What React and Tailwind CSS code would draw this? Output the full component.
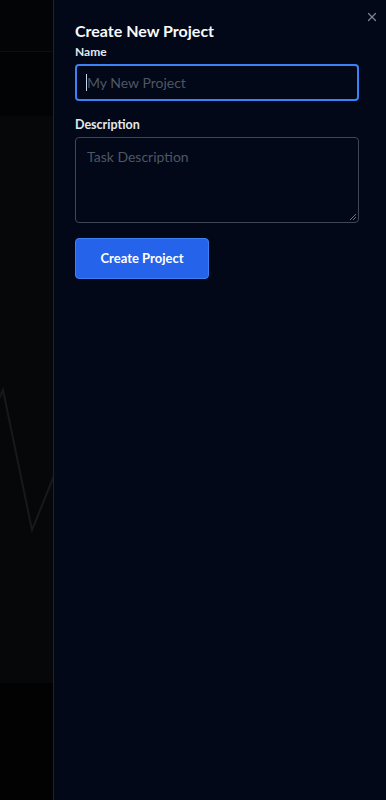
import React from "react";

export default function App() {
  return (
    <div className="relative w-[386px] h-[800px] overflow-hidden bg-[#010102]" style={{ fontFamily: 'Lato, "Noto Sans", sans-serif' }}>
      {/* background page (dimmed) */}
      <div className="flex flex-col h-full">
        <div className="h-[52px] border-b border-[#0d0e10] bg-[#030406]"></div>
        <div className="h-[64px] bg-[#020304]"></div>
        <div className="relative h-[567px] bg-[#060709]">
          <svg className="absolute left-0 top-0" width="60" height="567" viewBox="0 0 60 567">
            <polyline points="-2,285 3,274 32,414 60,345" fill="none" stroke="#18191c" strokeWidth="2" />
          </svg>
        </div>
        <div className="flex-1 bg-[#020203]"></div>
      </div>

      {/* sheet */}
      <div className="absolute top-0 bottom-0 left-[53px] right-0 bg-[#020817] border-l border-[#1c2434] pl-[21px] pr-[22px] pt-[20px]">
        <button className="absolute right-[7px] top-[10px] text-[#7b8496]">
          <svg width="14" height="14" viewBox="0 0 24 24" fill="none" stroke="currentColor" strokeWidth="2.2" strokeLinecap="round">
            <path d="M18 6 6 18" />
            <path d="m6 6 12 12" />
          </svg>
        </button>
        <h2 className="text-[16px] leading-[22px] font-bold text-[#f8fafc]">Create New Project</h2>
        <div className="flex flex-col">
          <label className="text-[12px] leading-[18px] font-bold text-[#e2e8f0] mt-[1px]">Name</label>
          <div className="mt-[3px] h-[37px] w-[284px] rounded-[4px] border-2 border-[#3b82f6] bg-[#020817] flex items-center px-[9px]">
            <span className="w-[1px] h-[17px] bg-[#cbd5e1]"></span>
            <span className="text-[14px] text-[#4e5664]">My New Project</span>
          </div>
          <label className="text-[12.5px] leading-[18px] font-bold text-[#e2e8f0] mt-[15px]">Description</label>
          <div className="relative mt-[3px] h-[86px] w-[284px] rounded-[4px] border border-[#3f4654] bg-[#020817] px-[11px] pt-[6px]">
            <span className="text-[14px] text-[#4e5664]">Task Description</span>
            <svg className="absolute right-[2px] bottom-[2px]" width="6" height="6" viewBox="0 0 6 6">
              <path d="M6 0 0 6 M6 3 3 6" stroke="#6b7280" strokeWidth="1" />
            </svg>
          </div>
          <button className="mt-[15px] h-[41px] w-[134px] rounded-[4px] bg-[#2563eb] border border-[#3b82f6] text-white text-[13px] font-bold">Create Project</button>
        </div>
      </div>
    </div>
  );
}
